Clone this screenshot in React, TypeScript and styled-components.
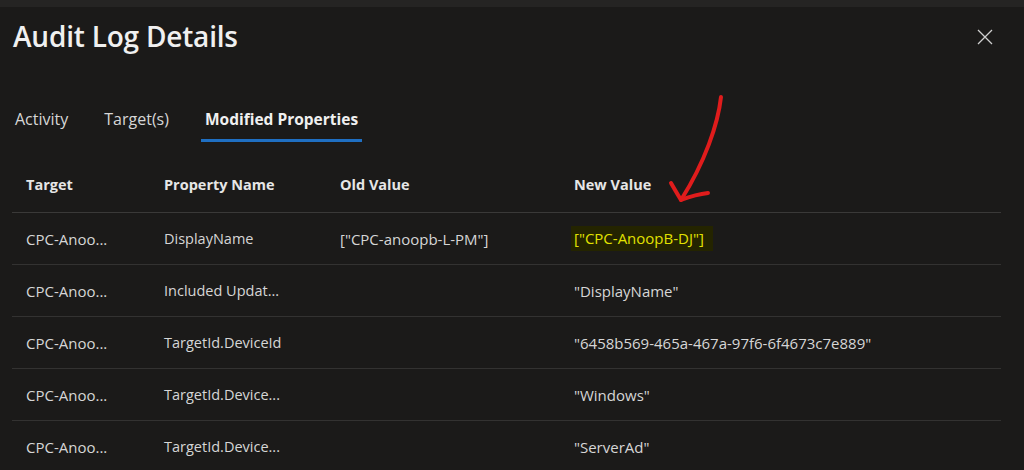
import styled, { createGlobalStyle } from "styled-components";

const GlobalStyle = createGlobalStyle`
  html, body {
    margin: 0;
    padding: 0;
    background: #1b1a19;
  }
  body {
    font-family: "Open Sans", "Noto Sans", sans-serif;
    color: #d6d6d6;
  }
`;

type Row = {
  target: string;
  property: string;
  oldValue: string;
  newValue: string;
  highlight?: boolean;
};

const rows: Row[] = [
  { target: "CPC-Anoo...", property: "DisplayName", oldValue: '["CPC-anoopb-L-PM"]', newValue: '["CPC-AnoopB-DJ"]', highlight: true },
  { target: "CPC-Anoo...", property: "Included Updat...", oldValue: "", newValue: '"DisplayName"' },
  { target: "CPC-Anoo...", property: "TargetId.DeviceId", oldValue: "", newValue: '"6458b569-465a-467a-97f6-6f4673c7e889"' },
  { target: "CPC-Anoo...", property: "TargetId.Device...", oldValue: "", newValue: '"Windows"' },
  { target: "CPC-Anoo...", property: "TargetId.Device...", oldValue: "", newValue: '"ServerAd"' },
];

const tabs = ["Activity", "Target(s)", "Modified Properties"];

export default function App() {
  return (
    <Page>
      <GlobalStyle />
      <TopStrip />
      <Panel>
        <Header>
          <Title>Audit Log Details</Title>
          <CloseButton aria-label="Close">
            <svg width="16" height="16" viewBox="0 0 16 16">
              <path d="M1 1 L15 15 M15 1 L1 15" stroke="#cfcfcf" strokeWidth="1.3" fill="none" />
            </svg>
          </CloseButton>
        </Header>
        <Tabs>
          {tabs.map((t, i) => (
            <Tab key={t} $active={i === 2}>
              {t}
            </Tab>
          ))}
        </Tabs>
        <Table>
          <HeadRow>
            <HeadCell>Target</HeadCell>
            <HeadCell>Property Name</HeadCell>
            <HeadCell>Old Value</HeadCell>
            <HeadCell>New Value</HeadCell>
          </HeadRow>
          {rows.map((r, i) => (
            <BodyRow key={i}>
              <Cell>{r.target}</Cell>
              <Cell $tight>{r.property}</Cell>
              <Cell>{r.oldValue}</Cell>
              <Cell>{r.highlight ? <Marked>{r.newValue}</Marked> : r.newValue}</Cell>
            </BodyRow>
          ))}
        </Table>
      </Panel>
      {/* hand-drawn red annotation arrow */}
      <Arrow width="70" height="120" viewBox="0 0 70 120">
        <path
          d="M58 3 C55 30 42 68 18 106"
          stroke="#e01c1c"
          strokeWidth="4"
          strokeLinecap="round"
          fill="none"
        />
        <path
          d="M8 89 C12 96 15 101 18 106 C26 103 36 100 45 99"
          stroke="#e01c1c"
          strokeWidth="4"
          strokeLinecap="round"
          strokeLinejoin="round"
          fill="none"
        />
      </Arrow>
    </Page>
  );
}

const Page = styled.div`
  position: relative;
  width: 1024px;
  height: 470px;
  overflow: hidden;
  background: #1b1a19;
`;

const TopStrip = styled.div`
  height: 7px;
  background: #252423;
`;

const Panel = styled.div`
  padding: 0 23px 0 12px;
`;

const Header = styled.div`
  display: flex;
  align-items: center;
  justify-content: space-between;
  height: 58px;
`;

const Title = styled.h1`
  margin: 0 0 0 1px;
  font-size: 28px;
  font-weight: 600;
  color: #f0f0f0;
  letter-spacing: -0.2px;
`;

const CloseButton = styled.button`
  display: flex;
  align-items: center;
  justify-content: center;
  width: 32px;
  height: 32px;
  padding: 0;
  margin-top: 2px;
  border: none;
  background: transparent;
`;

const Tabs = styled.div`
  display: flex;
  gap: 28px;
  margin-top: 39px;
  margin-left: -1px;
`;

const Tab = styled.div<{ $active?: boolean }>`
  padding: 4px 4px 9px;
  font-size: ${(p) => (p.$active ? "15.5px" : "16px")};
  font-weight: ${(p) => (p.$active ? 700 : 400)};
  color: ${(p) => (p.$active ? "#f0f0f0" : "#d6d6d6")};
  border-bottom: 3px solid ${(p) => (p.$active ? "#1f6fc2" : "transparent")};
`;

const Table = styled.div`
  margin-top: 17px;
  display: flex;
  flex-direction: column;
`;

const grid = `
  display: grid;
  grid-template-columns: 138px 176px 234px 1fr;
  align-items: center;
`;

const HeadRow = styled.div`
  ${grid}
  height: 53px;
  border-bottom: 1px solid #3a3938;
`;

const BodyRow = styled.div`
  ${grid}
  height: 51px;
  border-bottom: 1px solid #333231;
`;

const HeadCell = styled.div`
  padding-left: 14px;
  padding-bottom: 2px;
  font-size: 14.5px;
  font-weight: 700;
  color: #e6e6e6;
`;

const Cell = styled.div<{ $tight?: boolean }>`
  padding-left: 14px;
  font-size: ${(p) => (p.$tight ? "14.5px" : "15px")};
  color: #d6d6d6;
  white-space: nowrap;
`;

const Marked = styled.span`
  display: inline-block;
  margin-left: -3px;
  padding: 2px 9px 3px 3px;
  background: #242400;
  color: #e1e100;
`;

const Arrow = styled.svg`
  position: absolute;
  left: 663px;
  top: 94px;
`;
